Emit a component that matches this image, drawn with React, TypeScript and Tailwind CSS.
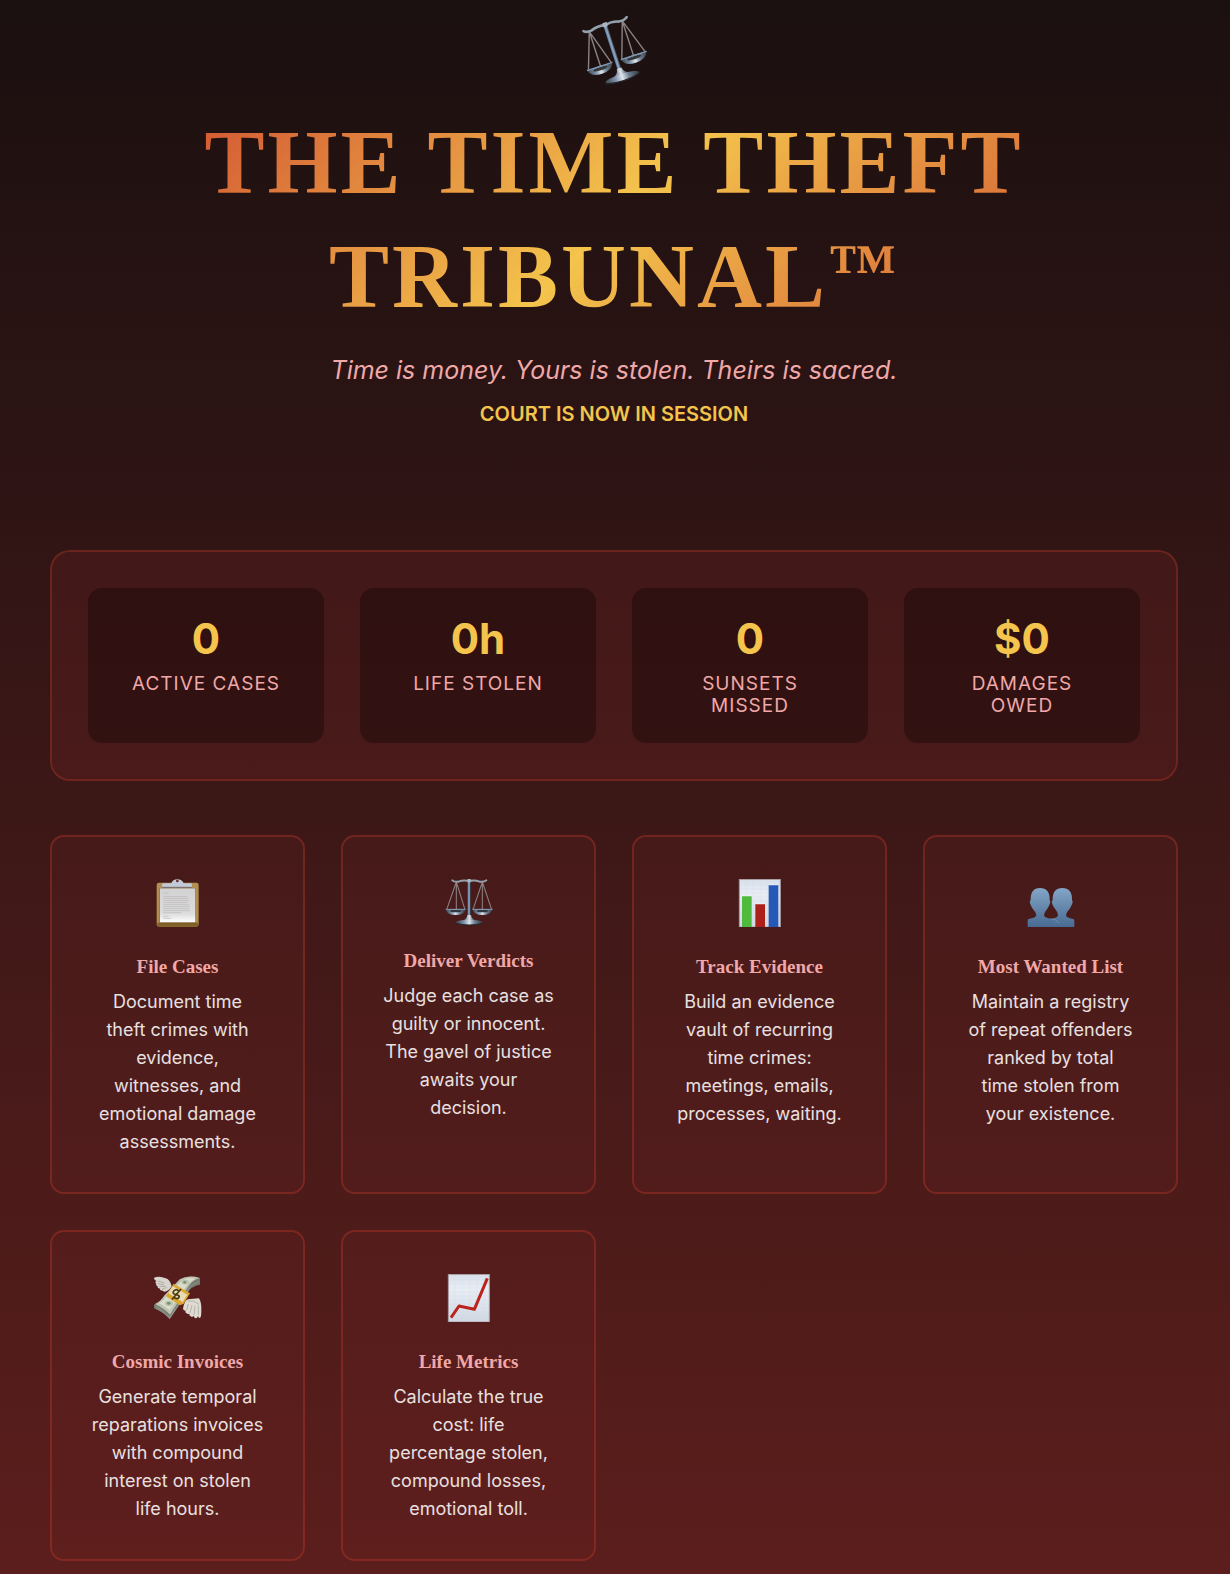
import React from "react";

function Scales({ className }: { className: string }) {
  return (
    <svg viewBox="0 0 144 144" className={className} aria-hidden="true">
      <defs>
        <linearGradient id="steel" x1="0" x2="1" y1="0" y2="0">
          <stop offset="0" stopColor="#3a4148" />
          <stop offset="0.3" stopColor="#7f93ab" />
          <stop offset="0.5" stopColor="#dfe5ea" />
          <stop offset="0.7" stopColor="#6d7f92" />
          <stop offset="1" stopColor="#33373d" />
        </linearGradient>
        <linearGradient id="post" x1="0" x2="1" y1="0" y2="0">
          <stop offset="0" stopColor="#5478a0" />
          <stop offset="0.5" stopColor="#93abc2" />
          <stop offset="1" stopColor="#33383f" />
        </linearGradient>
      </defs>
      <g fill="none" stroke="#8a8182" strokeWidth="3.2">
        <path d="M34 9 5 92M34 9V92M34 9 60 92" />
        <path d="M112 9 84 92M112 9V92M112 9 140 92" />
      </g>
      <path d="M22 4Q28 10 40 8Q56 2 72 6Q90 2 104 8Q117 10 124 4" fill="none" stroke="#93a1ad" strokeWidth="6" strokeLinecap="round" />
      <rect x="68" y="3" width="9" height="122" fill="url(#post)" />
      <circle cx="72.500" cy="5" r="6" fill="#a9b5c0" />
      <path d="M2 90H62Q58 108 32 108T2 90Z" fill="url(#steel)" />
      <path d="M82 90H143Q138 108 112 108T82 90Z" fill="url(#steel)" />
      <ellipse cx="32" cy="96" rx="17" ry="4" fill="#34373b" />
      <ellipse cx="112" cy="96" rx="17" ry="4" fill="#34373b" />
      <path d="M2 91H62M82 91H143" stroke="#7d96b4" strokeWidth="3" />
      <path d="M67 108Q66 120 50 126H96Q79 120 78 108Z" fill="url(#steel)" />
      <ellipse cx="73" cy="130" rx="40" ry="8" fill="url(#steel)" />
      <path d="M34 133Q73 143 112 133" fill="none" stroke="#23262a" strokeWidth="3" />
    </svg>
  );
}

function Clipboard() {
  return (
    <svg viewBox="0 0 144 144" className="h-12 w-12" aria-hidden="true">
      <defs>
        <linearGradient id="paper" x1="0" x2="0" y1="0" y2="1">
          <stop offset="0" stopColor="#d3d1d2" />
          <stop offset="0.75" stopColor="#dedddd" />
          <stop offset="1" stopColor="#ffffff" />
        </linearGradient>
      </defs>
      <rect x="8" y="11" width="126" height="132" rx="7" fill="#b08f50" />
      <path d="M10 131H132V137Q132 143 126 143H16Q10 143 10 137Z" fill="#806126" />
      <rect x="17" y="27" width="108" height="106" fill="#75592a" />
      <rect x="18" y="28" width="106" height="102" fill="url(#paper)" />
      <path
        d="M28 42H44M28 53H100M28 59H103M28 65H106M28 71H100M28 77H105M28 83H108M28 89H106M28 95H108M28 101H82M28 112H44M28 118H52"
        stroke="#b9b8ba"
        strokeWidth="2"
      />
      <path d="M24 25V17Q24 13 30 13H52Q56 1 70 1T89 13H108Q114 13 114 17V25Z" fill="#c3c9d6" />
      <path d="M24 25H114" stroke="#6f6a68" strokeWidth="3" />
      <circle cx="70" cy="6" r="4" fill="#632d2b" />
    </svg>
  );
}

function SheetBase() {
  return (
    <>
      <defs>
        <linearGradient id="sheet" x1="0" x2="0" y1="0" y2="1">
          <stop offset="0" stopColor="#d6dfe9" />
          <stop offset="0.3" stopColor="#e9eef5" />
          <stop offset="1" stopColor="#cfd8e1" />
        </linearGradient>
      </defs>
      <rect x="10" y="1" width="123" height="143" fill="url(#sheet)" stroke="#a79da2" strokeWidth="3" />
      <g stroke="#d5deea" strokeWidth="1">
        <path d="M12 18H131M12 30H131M12 42H131M12 54H131M12 66H131M12 78H131M12 90H131M12 102H131M12 114H131M12 126H131" />
        <path d="M30 3V142M52 3V142M74 3V142M96 3V142M118 3V142" />
      </g>
    </>
  );
}

function BarChart() {
  return (
    <svg viewBox="0 0 144 144" className="h-12 w-12" aria-hidden="true">
      <SheetBase />
      <rect x="18" y="51" width="29" height="93" fill="#4fba3d" />
      <rect x="58" y="75" width="29" height="69" fill="#ab2119" />
      <rect x="98" y="18" width="29" height="126" fill="#2658b8" />
      <path d="M18 51H47M58 75H87M98 18H127" stroke="#ffffff" strokeOpacity="0.45" strokeWidth="3" />
    </svg>
  );
}

function LineChart() {
  return (
    <svg viewBox="0 0 144 144" className="h-12 w-12" aria-hidden="true">
      <SheetBase />
      <path d="M18 131 42 96 88 106 127 13" fill="none" stroke="#bb241c" strokeWidth="9" strokeLinejoin="round" />
    </svg>
  );
}

function People() {
  return (
    <svg viewBox="0 0 144 144" className="h-12 w-12" aria-hidden="true">
      <defs>
        <linearGradient id="person" x1="0" x2="0" y1="0" y2="1">
          <stop offset="0" stopColor="#83a5c6" />
          <stop offset="1" stopColor="#496a92" />
        </linearGradient>
      </defs>
      <path d="M2 144V124Q2 120 8 119Q28 116 28 108Q28 100 19 92Q13 84 10 76Q6 68 11 62Q10 28 39 27Q69 28 68 62Q72 68 68 76Q65 84 59 92Q51 100 51 108Q51 116 70 119Q92 122 98 144Z" fill="url(#person)" />
      <path d="M48 144Q58 122 76 119Q93 116 93 108Q93 100 86 92Q79 84 76 76Q72 68 77 62Q76 28 106 27Q136 28 135 62Q139 68 135 76Q132 84 126 92Q117 100 117 108Q117 116 135 119Q142 120 142 124V144Z" fill="url(#person)" />
      <path d="M70 119Q89 120 95 133" fill="none" stroke="#809fbd" strokeWidth="2" />
    </svg>
  );
}

function MoneyWings() {
  return (
    <svg viewBox="0 0 144 144" className="h-12 w-12" aria-hidden="true">
      <path d="M0 92Q18 85 30 66L77 16Q102 2 138 12V32Q118 36 107 47L47 136Q32 117 0 103Z" fill="#747a70" />
      <path d="M3 90Q20 83 32 64L78 16Q103 2 137 12Q116 18 104 36L48 122Q30 103 3 90Z" fill="#bfc1b1" />
      <path d="M14 88Q28 82 36 67L85 19Q105 9 124 14Q108 21 99 34L47 109Q32 95 14 88Z" fill="#dadbca" />
      <path d="M6 97Q32 110 48 130L106 40Q118 29 135 23M6 102Q32 115 47 133L107 43" fill="none" stroke="#a0a296" strokeWidth="2" />
      <ellipse cx="94" cy="24" rx="11" ry="7" fill="#b5c2a9" />
      <ellipse cx="92" cy="25" rx="4" ry="4" fill="#70906d" />
      <ellipse cx="45" cy="88" rx="12" ry="8" fill="#b5c2a9" />
      <ellipse cx="44" cy="88" rx="5" ry="4" fill="#70906d" />
      <path d="M36 67 59 29 108 58 89 89 78 94Z" fill="#dba72c" />
      <path d="M43 58 56 36 100 62 86 84Z" fill="#e7dcb6" />
      <path d="M73 50Q65 43 58 52Q54 60 64 62Q75 60 77 67Q75 77 62 71M79 43 56 78" transform="rotate(8 66 60)" fill="none" stroke="#4d3912" strokeWidth="5" />
      <path d="M52 33Q47 16 35 13Q17 5 0 11Q-1 17 7 21Q1 25 7 29Q4 34 11 37Q9 43 18 44Q17 51 27 50Q29 56 39 51Q48 48 53 36Z" fill="#d8d5ce" />
      <path d="M11 21 31 27M11 29 31 33M16 38 34 37M24 46 38 40" stroke="#9e9690" strokeWidth="2" />
      <path d="M94 82Q99 74 110 75L135 73Q143 86 142 111Q142 132 137 132Q132 131 132 125Q129 135 124 132Q119 131 119 125Q115 131 110 127Q105 125 106 119Q100 122 97 117Q92 116 95 110Q88 110 87 104Q88 94 94 82Z" fill="#dedbd3" />
      <path d="M103 90 98 108M114 93 108 117M123 95 120 123M133 95 133 122M101 81Q121 77 135 91" fill="none" stroke="#a49b93" strokeWidth="2" />
    </svg>
  );
}

const stats = [
  { value: "0", label: ["ACTIVE CASES"] },
  { value: "0h", label: ["LIFE STOLEN"] },
  { value: "0", label: ["SUNSETS", "MISSED"] },
  { value: "$0", label: ["DAMAGES", "OWED"] },
];

const features = [
  {
    title: "File Cases",
    icon: <Clipboard />,
    iconBox: "h-[63px]",
    lines: ["Document time", "theft crimes with", "evidence,", "witnesses, and", "emotional damage", "assessments."],
  },
  {
    title: "Deliver Verdicts",
    icon: <Scales className="h-12 w-12" />,
    iconBox: "h-[57px]",
    lines: ["Judge each case as", "guilty or innocent.", "The gavel of justice", "awaits your", "decision."],
  },
  {
    title: "Track Evidence",
    icon: <BarChart />,
    iconBox: "h-[63px]",
    lines: ["Build an evidence", "vault of recurring", "time crimes:", "meetings, emails,", "processes, waiting."],
  },
  {
    title: "Most Wanted List",
    icon: <People />,
    iconBox: "h-[63px]",
    lines: ["Maintain a registry", "of repeat offenders", "ranked by total", "time stolen from", "your existence."],
  },
  {
    title: "Cosmic Invoices",
    icon: <MoneyWings />,
    iconBox: "h-[63px]",
    lines: ["Generate temporal", "reparations invoices", "with compound", "interest on stolen", "life hours."],
  },
  {
    title: "Life Metrics",
    icon: <LineChart />,
    iconBox: "h-[63px]",
    lines: ["Calculate the true", "cost: life", "percentage stolen,", "compound losses,", "emotional toll."],
  },
];

export default function App() {
  return (
    <main className="min-h-screen bg-[linear-gradient(180deg,#1b1010_0%,#2e1414_30%,#421918_60%,#5b1e1c_100%)] pt-[21px] pr-[52px] pb-3 pl-[50px] text-center font-['Inter',sans-serif]">
      <header>
        <Scales className="mx-auto h-16 w-16 -rotate-[18deg]" />
        <h1 className="mt-[21px] bg-[linear-gradient(135deg,#c9372c_0%,#f4c44c_50%,#c9372c_100%)] bg-clip-text font-['Liberation_Serif',serif] text-[90px] leading-[114px] font-bold tracking-[3px] text-transparent">
          THE TIME THEFT
          <br />
          TRIBUNAL<span className="align-[16px] text-[68px] leading-none">™</span>
        </h1>
        <p className="mt-[18px] text-[25px] leading-9 text-[#f0a8a8] italic">
          Time is money. Yours is stolen. Theirs is sacred.
        </p>
        <p className="mt-3 text-[20px] leading-7 font-semibold text-[#f4c44c]">COURT IS NOW IN SESSION</p>
      </header>

      <section className="mt-[122px] grid grid-cols-4 gap-9 rounded-[20px] border-2 border-[#c0392b]/40 bg-[#872a28]/20 bg-clip-padding p-9">
        {stats.map((s) => (
          <div key={s.label[0]} className="rounded-[14px] bg-black/30 px-4 pt-[27px] pb-[26px]">
            <div className="text-[42px] leading-[48px] font-bold text-[#f4c44c]">{s.value}</div>
            <div className="mt-[10px] min-h-11 text-[19px] leading-[22px] tracking-[1px] text-[#f0a8a8]">
              {s.label.map((l) => (
                <span key={l} className="block">
                  {l}
                </span>
              ))}
            </div>
          </div>
        ))}
      </section>

      <section className="mt-[54px] grid grid-cols-4 gap-9">
        {features.map((f) => (
          <article key={f.title} className="rounded-[14px] border-2 border-[#c0392b]/40 bg-[#7c2a28]/15 bg-clip-padding px-6 pt-[37px] pb-9">
            <div className={`${f.iconBox} flex items-start justify-center pt-[5px]`}>{f.icon}</div>
            <h2 className="mt-[18px] font-['Liberation_Serif',serif] text-[19px] leading-6 font-bold text-[#f0a8a8]">{f.title}</h2>
            <p className="mt-[9px] text-[18px] leading-7 text-[#e8e0e0]">
              {f.lines.map((l) => (
                <span key={l} className="block whitespace-nowrap">
                  {l}{" "}
                </span>
              ))}
            </p>
          </article>
        ))}
      </section>
    </main>
  );
}
